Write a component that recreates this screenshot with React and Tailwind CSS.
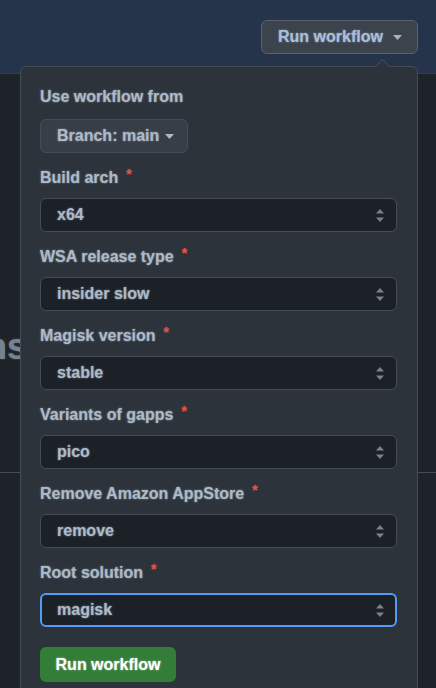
import React from "react";

const glow = "[text-shadow:0_0_2px_rgba(173,186,199,0.7)]";

const fields = [
  { label: "Build arch", value: "x64" },
  { label: "WSA release type", value: "insider slow" },
  { label: "Magisk version", value: "stable" },
  { label: "Variants of gapps", value: "pico" },
  { label: "Remove Amazon AppStore", value: "remove" },
  { label: "Root solution", value: "magisk", focus: true },
];

// little up/down arrows on the right of each select
function Updown() {
  return (
    <svg width="8" height="13" viewBox="0 0 8 13" className="shrink-0">
      <path d="M4 0 L8 4.5 L0 4.5 Z" fill="#768390" />
      <path d="M0 8.5 L8 8.5 L4 13 Z" fill="#768390" />
    </svg>
  );
}

function Caret({ color = "#adbac7" }) {
  return (
    <svg width="9" height="5" viewBox="0 0 9 5" className="shrink-0">
      <path d="M0 0 L9 0 L4.5 5 Z" fill={color} />
    </svg>
  );
}

function Field({ label, value, focus }) {
  return (
    <div className="flex flex-col">
      <div className={`h-5 flex items-center text-[16px] font-bold text-[#adbac7] leading-5 ${glow}`}>
        {label}
        <span className="ml-2 text-[14px] text-[#e5534b] -mt-2 [text-shadow:0_0_2px_rgba(229,83,75,0.6)]">*</span>
      </div>
      <div
        className={`mt-[10px] h-[34px] flex items-center justify-between pl-4 pr-3 rounded-md bg-[#1c2128] ${
          focus ? "border-2 border-[#539bf5] pl-[15px] pr-[11px]" : "border border-[#444c56]"
        }`}
      >
        <span className={`text-[16px] font-bold text-[#adbac7] ${glow}`}>{value}</span>
        <Updown />
      </div>
    </div>
  );
}

export default function App() {
  return (
    <div className="w-[436px] h-[688px] relative overflow-hidden bg-[#1e232a] font-['Liberation_Sans',Arial,sans-serif]">
      {/* repo header band */}
      <div className="h-[74px] bg-[#25344a] border-b border-[#2f3d52] flex justify-end items-start pt-5 pr-[18px]">
        <button className="h-[34px] w-[157px] flex items-center justify-between pl-[16px] pr-[15px] rounded-md bg-[#3c434c] border border-[#5a626c]">
          <span className="text-[16px] font-bold text-[#a9bfdc] [text-shadow:0_0_2px_rgba(169,191,220,0.7)]">
            Run workflow
          </span>
          <Caret color="#a9b4c2" />
        </button>
      </div>

      {/* page content that sits behind the popover */}
      <div className="flex flex-col">
        <div className="h-[251px]" />
        <div className="w-[27px] overflow-hidden flex justify-end">
          <span className="whitespace-nowrap text-[36px] font-bold text-[#768390] leading-[44px] [text-shadow:0_0_2px_rgba(118,131,144,0.6)]">
            Actions
          </span>
        </div>
        <div className="h-[103px]" />
        <div className="h-px bg-[#444c56]" />
      </div>

      {/* dropdown popover */}
      <div className="absolute left-5 top-[66px] w-[398px] h-[640px] rounded-md bg-[#2d333b] border border-[#444c56] pl-[19px] pr-5 pt-5">
        <div className="absolute -top-[6px] right-[29px] w-[11px] h-[11px] rotate-45 bg-[#2d333b] border-l border-t border-[#444c56]" />
        <div className={`h-5 flex items-center text-[16px] font-bold text-[#adbac7] ${glow}`}>
          Use workflow from
        </div>
        <button className="mt-3 h-[34px] w-[148px] flex items-center gap-[6px] pl-[16px] rounded-md bg-[#373e47] border border-[#444c56]">
          <span className={`text-[16px] font-bold text-[#adbac7] ${glow}`}>Branch: main</span>
          <Caret />
        </button>
        <div className="mt-[15px] flex flex-col gap-[15px]">
          {fields.map((f) => (
            <Field key={f.label} {...f} />
          ))}
        </div>
        <button className="mt-5 h-[35px] w-[136px] flex items-center justify-center rounded-md bg-[#347d39]">
          <span className="text-[16px] font-bold text-white [text-shadow:0_0_2px_rgba(255,255,255,0.6)]">
            Run workflow
          </span>
        </button>
      </div>
    </div>
  );
}
